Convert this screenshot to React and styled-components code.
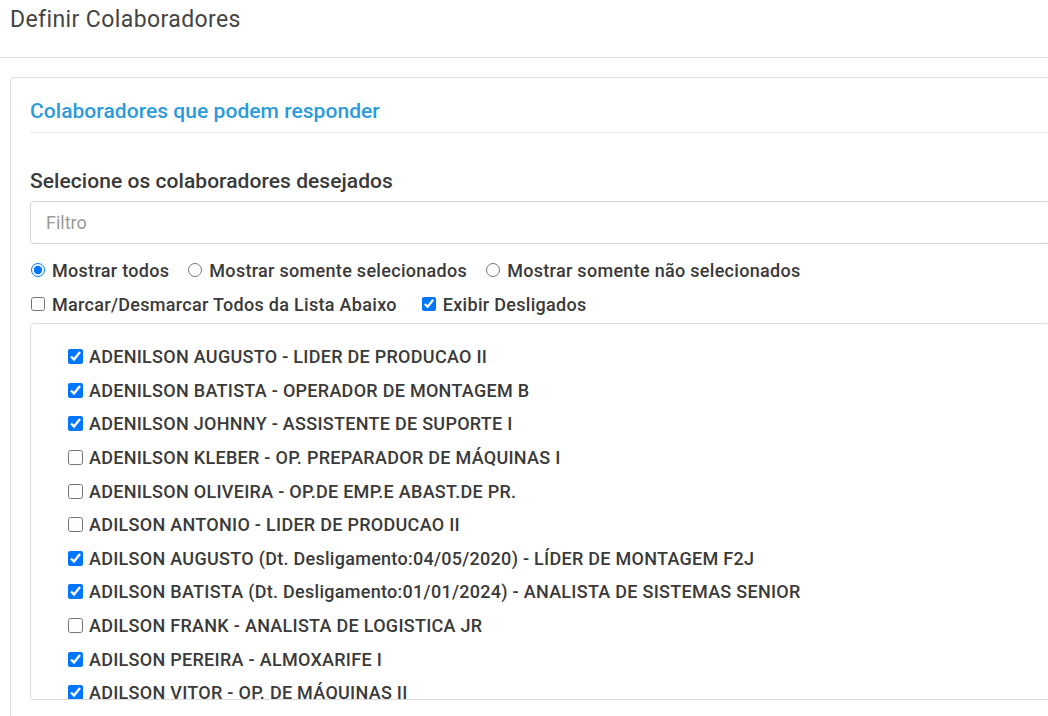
import React from "react";
import styled, { createGlobalStyle } from "styled-components";

const GlobalStyle = createGlobalStyle`
  html, body {
    margin: 0;
    padding: 0;
    background: #fff;
    font-family: Roboto, "Liberation Sans", sans-serif;
    overflow: hidden;
  }
`;

const Page = styled.div`
  width: 1048px;
  height: 716px;
  overflow: hidden;
`;

const Header = styled.div`
  height: 58px;
  border-bottom: 1px solid #e3e3e3;
  padding: 6px 10px 0;
  box-sizing: border-box;
  h1 {
    margin: 0;
    font-size: 23px;
    line-height: 28px;
    font-weight: 400;
    color: #444;
    letter-spacing: 0.4px;
  }
`;

const Card = styled.div`
  margin: 19px 0 0 10px;
  width: 1060px;
  border: 1px solid #dedede;
  border-radius: 4px;
  padding: 20px 19px 20px;
  box-sizing: border-box;
`;

const CardTitle = styled.h2`
  margin: 0;
  font-size: 21px;
  line-height: 26px;
  font-weight: 500;
  color: #2a9bdc;
  letter-spacing: 0.05px;
  padding-bottom: 8px;
  border-bottom: 1px solid #eaeaea;
`;

const SectionLabel = styled.div`
  margin-top: 35px;
  font-size: 21px;
  font-weight: 500;
  color: #3a3a3a;
  line-height: 26px;
  letter-spacing: 0.05px;
`;

const FilterInput = styled.input`
  display: block;
  margin-top: 7px;
  width: 100%;
  height: 43px;
  box-sizing: border-box;
  border: 1px solid #d4d4d4;
  border-radius: 4px;
  padding: 0 15px;
  font-family: inherit;
  font-size: 18px;
  color: #333;
  outline: none;
  &::placeholder {
    color: #9a9a9a;
  }
`;

const OptionRow = styled.div`
  display: flex;
  align-items: center;
  gap: ${(p) => p.$gap}px;
  margin-top: ${(p) => p.$top}px;
  height: 22px;
`;

const Option = styled.label`
  display: flex;
  align-items: center;
  font-size: 18px;
  font-weight: 500;
  letter-spacing: 0.3px;
  color: #3a3a3a;
  input {
    width: 14px;
    height: 14px;
    margin: 0 7px 0 1px;
  }
`;

const ListBox = styled.div`
  margin-top: 8px;
  height: 377px;
  border: 1px solid #dcdcdc;
  border-radius: 4px;
  overflow: hidden;
  box-sizing: border-box;
  padding: 16px 0 0 36px;
`;

const Item = styled.label`
  display: flex;
  align-items: center;
  height: 33.6px;
  font-size: 18px;
  font-weight: 500;
  letter-spacing: 0.28px;
  color: #3a3a3a;
  white-space: nowrap;
  input {
    width: 15px;
    height: 15px;
    margin: 0 6px 0 1px;
  }
`;

const people = [
  ["ADENILSON AUGUSTO - LIDER DE PRODUCAO II", true],
  ["ADENILSON BATISTA - OPERADOR DE MONTAGEM B", true],
  ["ADENILSON JOHNNY - ASSISTENTE DE SUPORTE I", true],
  ["ADENILSON KLEBER - OP. PREPARADOR DE MÁQUINAS I", false],
  ["ADENILSON OLIVEIRA - OP.DE EMP.E ABAST.DE PR.", false],
  ["ADILSON ANTONIO - LIDER DE PRODUCAO II", false],
  ["ADILSON AUGUSTO (Dt. Desligamento:04/05/2020) - LÍDER DE MONTAGEM F2J", true],
  ["ADILSON BATISTA (Dt. Desligamento:01/01/2024) - ANALISTA DE SISTEMAS SENIOR", true],
  ["ADILSON FRANK - ANALISTA DE LOGISTICA JR", false],
  ["ADILSON PEREIRA - ALMOXARIFE I", true],
  ["ADILSON VITOR - OP. DE MÁQUINAS II", true],
];

export default function App() {
  return (
    <Page>
      <GlobalStyle />
      <Header>
        <h1>Definir Colaboradores</h1>
      </Header>
      <Card>
        <CardTitle>Colaboradores que podem responder</CardTitle>
        <SectionLabel>Selecione os colaboradores desejados</SectionLabel>
        <FilterInput placeholder="Filtro" />
        <OptionRow $top={15} $gap={18}>
          <Option>
            <input type="radio" name="show" defaultChecked />
            Mostrar todos
          </Option>
          <Option>
            <input type="radio" name="show" />
            Mostrar somente selecionados
          </Option>
          <Option>
            <input type="radio" name="show" />
            Mostrar somente não selecionados
          </Option>
        </OptionRow>
        <OptionRow $top={12} $gap={24}>
          <Option>
            <input type="checkbox" />
            Marcar/Desmarcar Todos da Lista Abaixo
          </Option>
          <Option>
            <input type="checkbox" defaultChecked />
            Exibir Desligados
          </Option>
        </OptionRow>
        <ListBox>
          {people.map(([name, checked]) => (
            <Item key={name}>
              <input type="checkbox" defaultChecked={checked} />
              {name}
            </Item>
          ))}
        </ListBox>
      </Card>
    </Page>
  );
}
